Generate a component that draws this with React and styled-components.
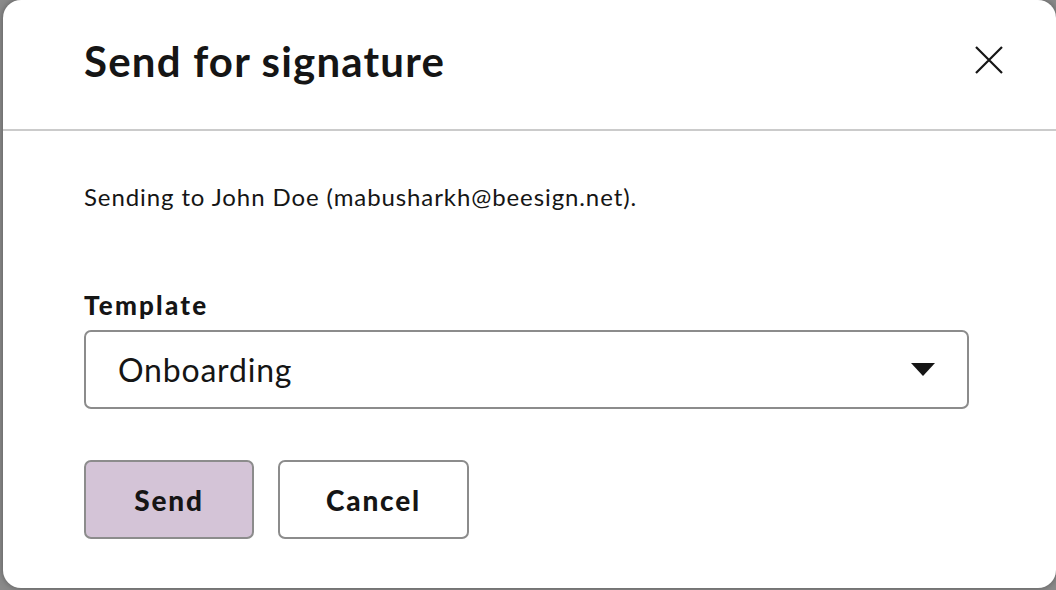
import styled, { createGlobalStyle } from "styled-components"

const Global = createGlobalStyle`
  html, body {
    margin: 0;
    padding: 0;
    background: #8a8a8a;
  }
  body {
    font-family: Lato, "Noto Sans", sans-serif;
    color: #151515;
  }
`

const Backdrop = styled.div`
  width: 1056px;
  height: 590px;
  padding: 0 0 2px 3px;
  box-sizing: border-box;
  display: flex;
  overflow: hidden;
`

const Dialog = styled.div`
  flex: 1;
  background: #fff;
  border-radius: 18px;
  box-shadow: 0 0 6px rgba(0, 0, 0, 0.35);
  display: flex;
  flex-direction: column;
`

const Header = styled.div`
  height: 129px;
  border-bottom: 2px solid #cbcbcb;
  display: flex;
  align-items: center;
  justify-content: space-between;
  padding: 0 52px 0 81px;
`

const Title = styled.h1`
  margin: 0 0 8px;
  font-size: 42px;
  font-weight: 700;
  letter-spacing: 1.2px;
`

const Close = styled.button`
  border: 0;
  background: none;
  padding: 0;
  margin-bottom: 10px;
  width: 30px;
  height: 30px;
  display: flex;
  align-items: center;
  justify-content: center;
  cursor: pointer;
`

const Body = styled.div`
  padding: 50px 87px 0 81px;
  display: flex;
  flex-direction: column;
`

const Text = styled.p`
  margin: 0;
  font-size: 24px;
  line-height: 32px;
  letter-spacing: 0.9px;
`

const Label = styled.label`
  margin-top: 76px;
  font-size: 26px;
  font-weight: 900;
  line-height: 33px;
  letter-spacing: 2.2px;
`

const Select = styled.div`
  margin-top: 8px;
  height: 79px;
  box-sizing: border-box;
  border: 2px solid #8c8c8c;
  border-radius: 7px;
  display: flex;
  align-items: center;
  justify-content: space-between;
  padding: 0 32px 0 32px;
  font-size: 32px;
  letter-spacing: 0.8px;
`

const Caret = styled.span`
  width: 0;
  height: 0;
  border-left: 12px solid transparent;
  border-right: 12px solid transparent;
  border-top: 13px solid #151515;
`

const Actions = styled.div`
  margin-top: 51px;
  display: flex;
  gap: 24px;
`

const Button = styled.button`
  height: 79px;
  width: ${p => p.w}px;
  box-sizing: border-box;
  border: 2px solid #8c8c8c;
  border-radius: 7px;
  background: ${p => (p.primary ? "#d4c4d7" : "#fff")};
  font-family: inherit;
  font-size: 28px;
  font-weight: 900;
  letter-spacing: 1.8px;
  color: #151515;
  cursor: pointer;
`

const App = () => {
  return (
    <>
      <Global />
      <Backdrop>
        <Dialog>
          <Header>
            <Title>Send for signature</Title>
            <Close aria-label="Close">
              <svg width="28" height="28" viewBox="0 0 28 28" fill="none">
                <path d="M1 1L27 27M27 1L1 27" stroke="#151515" strokeWidth="2.2" />
              </svg>
            </Close>
          </Header>
          <Body>
            <Text>Sending to John Doe (mabusharkh@beesign.net).</Text>
            <Label>Template</Label>
            <Select>
              <span>Onboarding</span>
              <Caret />
            </Select>
            <Actions>
              <Button primary w={170}>Send</Button>
              <Button w={191}>Cancel</Button>
            </Actions>
          </Body>
        </Dialog>
      </Backdrop>
    </>
  )
}

export default App
